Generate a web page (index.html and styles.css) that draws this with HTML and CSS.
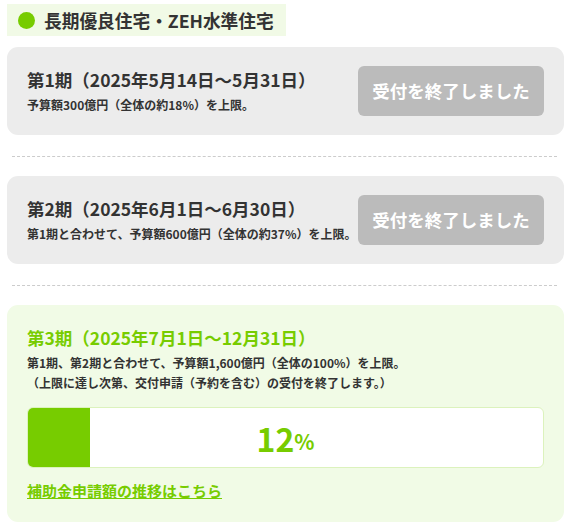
FILE: index.html
```html
<!DOCTYPE html>
<html lang="ja">
<head>
  <meta charset="UTF-8" />
  <meta name="viewport" content="width=device-width, initial-scale=1.0" />
  <title>長期優良住宅・ZEH水準住宅</title>
  <link rel="stylesheet" href="styles.css">
</head>
<body>
  <h2 class="heading"><span class="dot"></span>長期優良住宅・ZEH水準住宅</h2>

  <div class="period closed">
    <div class="info">
      <p class="title">第1期（2025年5月14日〜5月31日）</p>
      <p class="note">予算額300億円（全体の約18%）を上限。</p>
    </div>
    <span class="status">受付を終了しました</span>
  </div>

  <hr class="sep" />

  <div class="period closed">
    <div class="info">
      <p class="title">第2期（2025年6月1日〜6月30日）</p>
      <p class="note">第1期と合わせて、予算額600億円（全体の約37%）を上限。</p>
    </div>
    <span class="status">受付を終了しました</span>
  </div>

  <hr class="sep" />

  <div class="period current">
    <p class="title">第3期（2025年7月1日〜12月31日）</p>
    <p class="note">第1期、第2期と合わせて、予算額1,600億円（全体の100%）を上限。<br>（上限に達し次第、交付申請（予約を含む）の受付を終了します。）</p>
    <div class="progress">
      <div class="bar" style="width: 12%"></div>
      <span class="rate">12<small>%</small></span>
    </div>
    <a class="more" href="#">補助金申請額の推移はこちら</a>
  </div>
</body>
</html>
```

FILE: styles.css
```css
body {
  margin: 4px 12px 0 7px;
  font-family: "Noto Sans CJK JP", "Noto Sans", sans-serif;
  color: #333;
  background: #fff;
}
p {
  margin: 0;
}
.heading {
  display: inline-flex;
  align-items: center;
  gap: 9px;
  margin: 0;
  height: 32px;
  padding: 0 12px 0 11px;
  background: #f1fae6;
  font-size: 17.7px;
  font-weight: bold;
  line-height: 32px;
}
.dot {
  width: 17px;
  height: 17px;
  border-radius: 50%;
  background: #77cc00;
}
.period {
  border-radius: 11px;
  padding: 20px;
}
.heading + .period {
  margin-top: 11px;
}
.closed {
  display: flex;
  align-items: center;
  justify-content: space-between;
  padding: 19px 20px;
  background: #ececec;
}
.current {
  background: #f1fbe6;
}
.title {
  font-size: 17.5px;
  font-weight: bold;
  line-height: 25px;
  margin-bottom: 3px;
}
.current .title {
  color: #77cc00;
}
.note {
  font-size: 12px;
  font-weight: bold;
  line-height: 20px;
}
.status {
  width: 186px;
  height: 50px;
  line-height: 50px;
  text-align: center;
  border-radius: 6px;
  background: #bbbbbb;
  color: #fff;
  font-size: 17.5px;
  font-weight: bold;
}
.sep {
  border: none;
  border-top: 1px dashed #cccccc;
  margin: 21px 7px 19px 5px;
}
.progress {
  position: relative;
  display: flex;
  height: 59px;
  margin-top: 14px;
  border: 1px solid #dcf2bd;
  border-radius: 6px;
  background: #fff;
  overflow: hidden;
}
.bar {
  background: #77cc00;
}
.rate {
  position: absolute;
  left: 0;
  right: 0;
  top: 0;
  bottom: 0;
  display: flex;
  align-items: center;
  justify-content: center;
  color: #77cc00;
  font-size: 32px;
  font-weight: bold;
}
.rate small {
  font-size: 21px;
  margin-top: 7px;
}
.more {
  display: inline-block;
  margin-top: 13px;
  color: #77cc00;
  font-size: 15px;
  font-weight: bold;
  line-height: 20px;
}
```
